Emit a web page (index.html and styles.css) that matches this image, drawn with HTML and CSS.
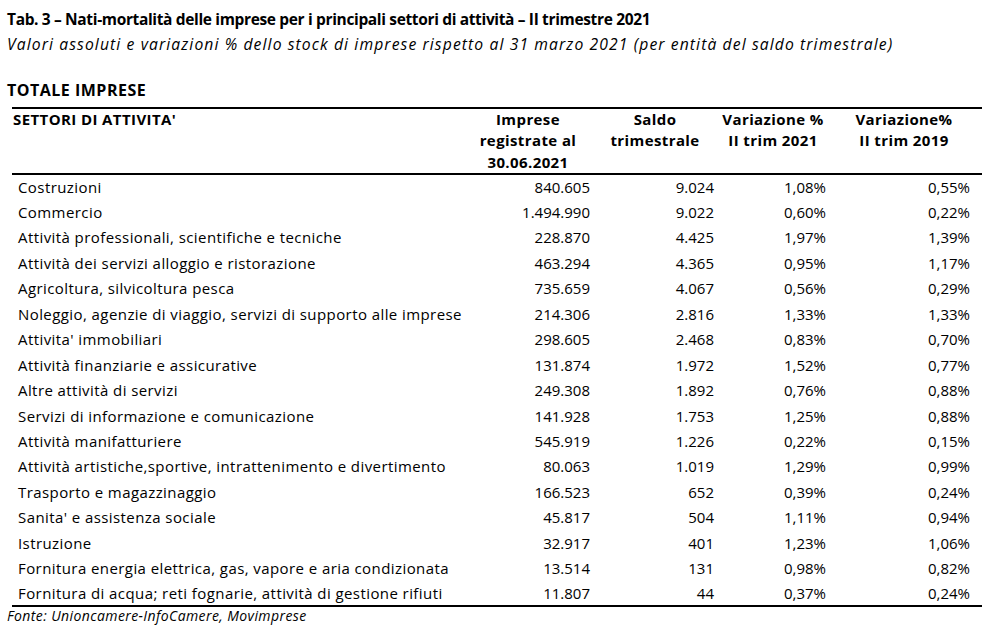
FILE: index.html
```html
<!DOCTYPE html>
<html lang="it">
<head>
<meta charset="utf-8">
<title>Tab. 3</title>
<link rel="stylesheet" href="styles.css">
</head>
<body>
<div class="page">
  <h1 class="title">Tab. 3 – Nati-mortalità delle imprese per i principali settori di attività – II trimestre 2021</h1>
  <p class="subtitle">Valori assoluti e variazioni % dello stock di imprese rispetto al 31 marzo 2021 (per entità del saldo trimestrale)</p>
  <h2 class="section">TOTALE IMPRESE</h2>
  <table class="data">
    <colgroup>
      <col class="c1"><col class="c2"><col class="c3"><col class="c4"><col class="c5">
    </colgroup>
    <thead>
      <tr>
        <th class="lab">SETTORI DI ATTIVITA'</th>
        <th>Imprese<br>registrate al<br>30.06.2021</th>
        <th>Saldo<br>trimestrale</th>
        <th>Variazione %<br>II trim 2021</th>
        <th>Variazione%<br>II trim 2019</th>
      </tr>
    </thead>
    <tbody>
      <tr><td>Costruzioni</td><td>840.605</td><td>9.024</td><td>1,08%</td><td class="last">0,55%</td></tr>
      <tr><td>Commercio</td><td>1.494.990</td><td>9.022</td><td>0,60%</td><td class="last">0,22%</td></tr>
      <tr><td>Attività professionali, scientifiche e tecniche</td><td>228.870</td><td>4.425</td><td>1,97%</td><td class="last">1,39%</td></tr>
      <tr><td>Attività dei servizi alloggio e ristorazione</td><td>463.294</td><td>4.365</td><td>0,95%</td><td class="last">1,17%</td></tr>
      <tr><td>Agricoltura, silvicoltura pesca</td><td>735.659</td><td>4.067</td><td>0,56%</td><td class="last">0,29%</td></tr>
      <tr><td>Noleggio, agenzie di viaggio, servizi di supporto alle imprese</td><td>214.306</td><td>2.816</td><td>1,33%</td><td class="last">1,33%</td></tr>
      <tr><td>Attivita' immobiliari</td><td>298.605</td><td>2.468</td><td>0,83%</td><td class="last">0,70%</td></tr>
      <tr><td>Attività finanziarie e assicurative</td><td>131.874</td><td>1.972</td><td>1,52%</td><td class="last">0,77%</td></tr>
      <tr><td>Altre attività di servizi</td><td>249.308</td><td>1.892</td><td>0,76%</td><td class="last">0,88%</td></tr>
      <tr><td>Servizi di informazione e comunicazione</td><td>141.928</td><td>1.753</td><td>1,25%</td><td class="last">0,88%</td></tr>
      <tr><td>Attività manifatturiere</td><td>545.919</td><td>1.226</td><td>0,22%</td><td class="last">0,15%</td></tr>
      <tr><td>Attività artistiche,sportive, intrattenimento e divertimento</td><td>80.063</td><td>1.019</td><td>1,29%</td><td class="last">0,99%</td></tr>
      <tr><td>Trasporto e magazzinaggio</td><td>166.523</td><td>652</td><td>0,39%</td><td class="last">0,24%</td></tr>
      <tr><td>Sanita' e assistenza sociale</td><td>45.817</td><td>504</td><td>1,11%</td><td class="last">0,94%</td></tr>
      <tr><td>Istruzione</td><td>32.917</td><td>401</td><td>1,23%</td><td class="last">1,06%</td></tr>
      <tr><td>Fornitura energia elettrica, gas, vapore e aria condizionata</td><td>13.514</td><td>131</td><td>0,98%</td><td class="last">0,82%</td></tr>
      <tr><td>Fornitura di acqua; reti fognarie, attività di gestione rifiuti</td><td>11.807</td><td>44</td><td>0,37%</td><td class="last">0,24%</td></tr>
    </tbody>
  </table>
  <p class="source">Fonte: Unioncamere-InfoCamere, Movimprese</p>
</div>
</body>
</html>
```
FILE: styles.css
```css
* { box-sizing: border-box; }
html, body { margin: 0; padding: 0; background: #fff; }
body {
  font-family: "Open Sans", Lato, "Liberation Sans", sans-serif;
  color: #000;
  font-size: 15px;
}
.page {
  padding: 8px 0 0 7px;
}
.title {
  margin: 0;
  font-size: 15.5px;
  font-weight: 700;
  letter-spacing: -0.35px;
  line-height: 22px;
  white-space: nowrap;
}
.subtitle {
  margin: 3px 0 0;
  font-size: 15.7px;
  font-style: italic;
  letter-spacing: 1.1px;
  line-height: 22px;
  white-space: nowrap;
}
.section {
  margin: 24px 0 6px;
  font-size: 16px;
  font-weight: 700;
  letter-spacing: 0.5px;
  line-height: 22px;
}
.data {
  margin-left: 5px;
  width: 970px;
  border-collapse: collapse;
  table-layout: fixed;
}
.c1 { width: 454px; }
.c2 { width: 130px; }
.c3 { width: 124px; }
.c4 { width: 112px; }
.c5 { width: 150px; }
.data thead tr {
  border-top: 2px solid #000;
  border-bottom: 2px solid #000;
}
.data th {
  font-weight: 700;
  font-size: 15px;
  letter-spacing: 0.4px;
  line-height: 21.3px;
  text-align: center;
  vertical-align: top;
  padding: 0 6px 0 0;
  height: 65px;
}
.data th.lab { text-align: left; padding-left: 1px; }
.data tbody tr:last-child { border-bottom: 2px solid #000; }
.data td {
  height: 25.45px;
  padding: 0 6px 0 0;
  text-align: right;
  line-height: 20px;
  white-space: nowrap;
  vertical-align: middle;
}
.data td:first-child { text-align: left; padding-left: 6px; letter-spacing: 0.42px; }
.data td.last { padding-right: 12px; }
.source {
  margin: 0;
  font-size: 14px;
  font-style: italic;
  letter-spacing: 0.4px;
  line-height: 18px;
}
```
